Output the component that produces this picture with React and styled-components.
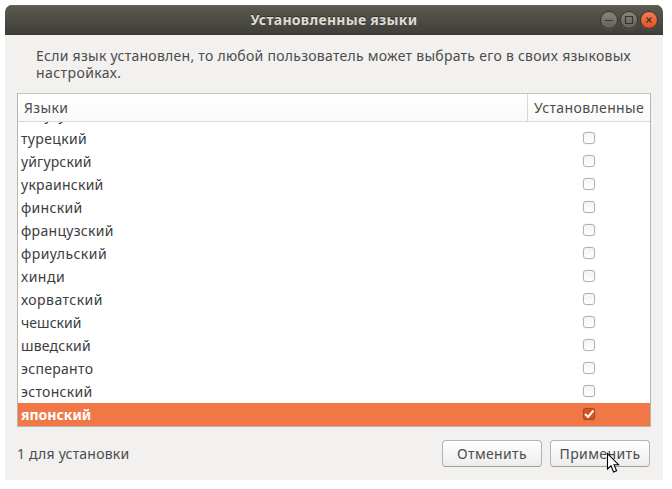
import React from "react";
import styled, { createGlobalStyle, css } from "styled-components";

const GlobalStyle = createGlobalStyle`
  * { box-sizing: border-box; }
  body {
    margin: 0;
    background: #fff;
    overflow: hidden;
    font-family: "Noto Sans", "Open Sans", sans-serif;
    font-size: 14px;
    color: #4c4c4c;
  }
`;

const Desktop = styled.main`
  width: 672px;
  height: 489px;
  padding: 5px 9px 9px 5px;
`;

const Window = styled.section`
  height: 475px;
  display: flex;
  flex-direction: column;
  background: #f2f1f0;
  border-radius: 7px 7px 0 0;
  overflow: hidden;
`;

const TitleBar = styled.header`
  flex: none;
  height: 30px;
  display: grid;
  grid-template-columns: 1fr auto 1fr;
  align-items: center;
  padding-right: 5px;
  background: linear-gradient(#5b5950, #3e3d38);
  box-shadow: inset 0 1px #66645b, inset 0 -1px #393834;
`;

const Title = styled.h1`
  grid-column: 2;
  margin: 0;
  padding-left: 5px;
  font-size: 14px;
  line-height: 30px;
  font-weight: 700;
  letter-spacing: 0.27px;
  color: #dfdbd2;
  text-shadow: 0 -1px #302f2b;
  white-space: nowrap;
`;

const Controls = styled.div`
  display: flex;
  justify-content: flex-end;
  gap: 2px;
`;

const Control = styled.button`
  width: 18px;
  height: 18px;
  padding: 0;
  border: 1px solid #363530;
  border-radius: 50%;
  background: ${(p) =>
    p.$close ? "linear-gradient(#f47d55, #e4511f)" : "linear-gradient(#87857c, #63615a)"};
  box-shadow: 0 1px #5b5952;
  svg { display: block; }
`;

const Description = styled.p`
  flex: none;
  margin: 12px 0 0 31px;
  height: 46px;
  line-height: 17px;
  white-space: nowrap;
`;

const Spaced = styled.span`
  letter-spacing: ${(p) => p.$ls || 0}px;
`;

const Table = styled.div`
  flex: none;
  width: 634px;
  height: 334px;
  margin-left: 12px;
  display: flex;
  flex-direction: column;
  border: 1px solid #b6b5b1;
  border-top-color: #c4c3c0;
  background: #fff;
`;

const HeaderRow = styled.div`
  flex: none;
  height: 28px;
  display: grid;
  grid-template-columns: 510px 1fr;
  border-bottom: 1px solid #d9d9d9;
  background: linear-gradient(#fff, #f9f9f8);
`;

const HeaderCell = styled.div`
  padding-left: 6px;
  line-height: 28px;
  white-space: nowrap;
  border-right: ${(p) => (p.$divider ? "1px solid #d9d9d9" : "0")};
`;

const Body = styled.div`
  height: 304px;
  display: flex;
  flex-direction: column;
  justify-content: flex-end;
  overflow: hidden;
`;

const Row = styled.div`
  flex: none;
  height: 23px;
  display: grid;
  grid-template-columns: 510px 1fr;
  line-height: 23px;
  color: #3c3c3c;
  &:first-child { line-height: 21px; }
  ${(p) =>
    p.$selected &&
    css`
      background: #f07746;
      color: #fff;
      font-weight: 700;
    `}
`;

const Name = styled.div`
  padding-left: 3px;
  letter-spacing: ${(p) => p.$ls || 0}px;
`;

const CheckCell = styled.div`
  display: flex;
  justify-content: center;
  padding-top: 5px;
`;

const Check = styled.div`
  width: 12px;
  height: 12px;
  border: 1px solid ${(p) => (p.$on ? "#b04a22" : "#b3b2b0")};
  border-radius: 3px;
  background: ${(p) => (p.$on ? "#d9501f" : "linear-gradient(#f4f4f4, #fff)")};
  box-shadow: 0 0 1px ${(p) => (p.$on ? "#a14320" : "#c4c4c4")};
  svg { display: block; }
`;

const Footer = styled.footer`
  display: flex;
  align-items: center;
  gap: 8px;
  height: 27px;
  margin: 13px 13px 0 12px;
`;

const Status = styled.div`
  flex: 1;
  line-height: 28px;
`;

const Button = styled.button`
  width: 100px;
  height: 27px;
  padding: 0;
  border: 1px solid #b4b3b0;
  border-bottom-color: #9f9e9b;
  border-radius: 4px;
  background: linear-gradient(#fff, #ededec);
  font: inherit;
  line-height: 25px;
  color: #4c4c4c;
  white-space: nowrap;
  letter-spacing: ${(p) => p.$ls || 0}px;
`;

const Pointer = styled.svg`
  position: absolute;
  left: 606px;
  top: 452px;
`;

const languages = [
  ["телугу", 0.4],
  ["турецкий", 0.35],
  ["уйгурский", 0.15],
  ["украинский", 0.27],
  ["финский", 0.3],
  ["французский", 0.3],
  ["фриульский", 0.45],
  ["хинди", 0.5],
  ["хорватский", 0.45],
  ["чешский", 0.05],
  ["шведский", 0.2],
  ["эсперанто", 0.3],
  ["эстонский", 0.3],
  ["японский", 0, true],
];

const glyphs = {
  minimize: "M4 8.5H12",
  maximize: "M4.5 4.5H11.5V11.5H4.5Z",
  close: "M5.5 5.5L10.5 10.5M10.5 5.5L5.5 10.5",
};

function WindowControl({ kind }) {
  return (
    <Control $close={kind === "close"} aria-label={kind}>
      <svg width="16" height="16" fill="none" stroke="#35342f" strokeWidth="1.2">
        <path d={glyphs[kind]} />
      </svg>
    </Control>
  );
}

export default function App() {
  return (
    <Desktop>
      <GlobalStyle />
      <Window>
        <TitleBar>
          <Title>Установленные языки</Title>
          <Controls>
            <WindowControl kind="minimize" />
            <WindowControl kind="maximize" />
            <WindowControl kind="close" />
          </Controls>
        </TitleBar>
        <Description>
          <Spaced $ls={0.265}>
            Если язык установлен, то любой пользователь может выбрать его в своих языковых
          </Spaced>
          <br />
          <Spaced $ls={0.42}>настройках.</Spaced>
        </Description>
        <Table>
          <HeaderRow>
            <HeaderCell $divider><Spaced $ls={0.35}>Языки</Spaced></HeaderCell>
            <HeaderCell><Spaced $ls={0.38}>Установленные</Spaced></HeaderCell>
          </HeaderRow>
          <Body>
            {languages.map(([name, ls, on]) => (
              <Row key={name} $selected={on}>
                <Name $ls={ls}>{name}</Name>
                <CheckCell>
                  <Check $on={on}>
                    {on && (
                      <svg width="10" height="10" fill="none" stroke="#fff" strokeWidth="2">
                        <path d="M1 5L4 8L9.5 1.5" />
                      </svg>
                    )}
                  </Check>
                </CheckCell>
              </Row>
            ))}
          </Body>
        </Table>
        <Footer>
          <Status><Spaced $ls={0.2}>1 для установки</Spaced></Status>
          <Button $ls={0.35}>Отменить</Button>
          <Button $ls={0.4}>Применить</Button>
        </Footer>
      </Window>
      <Pointer width="14" height="22" viewBox="0 0 14 22">
        <path
          d="M1.5 1.5V17L5 13.8L7.6 20L10.6 18.8L8 12.7H12.5Z"
          fill="#fff"
          stroke="#000"
          strokeWidth="1.1"
        />
      </Pointer>
    </Desktop>
  );
}
